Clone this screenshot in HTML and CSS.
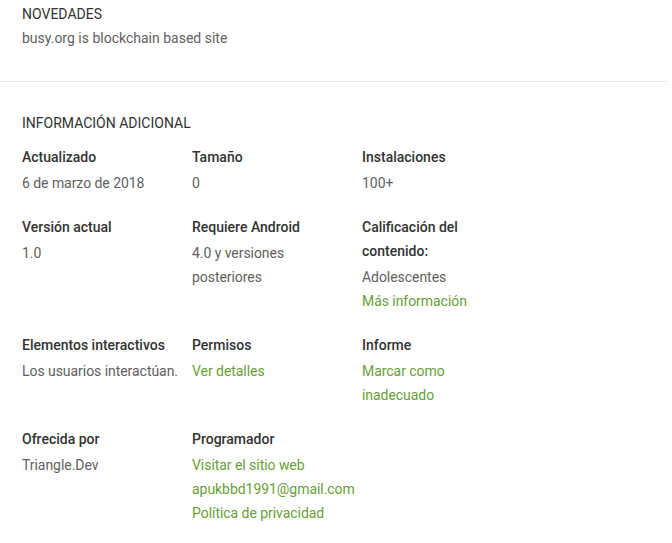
FILE: index.html
```html
<!DOCTYPE html>
<html lang="es">
<head>
<meta charset="utf-8">
<link rel="stylesheet" href="styles.css">
</head>
<body>
<div class="page">
  <section class="whatsnew">
    <h2 class="title">NOVEDADES</h2>
    <div class="desc">busy.org is blockchain based site</div>
  </section>
  <hr class="divider">
  <section class="info">
    <h2 class="title">INFORMACIÓN ADICIONAL</h2>
    <div class="grid">
      <div class="item"><div class="label">Actualizado</div><div class="value">6 de marzo de 2018</div></div>
      <div class="item"><div class="label">Tamaño</div><div class="value">0</div></div>
      <div class="item"><div class="label">Instalaciones</div><div class="value">100+</div></div>

      <div class="item"><div class="label">Versión actual</div><div class="value">1.0</div></div>
      <div class="item"><div class="label">Requiere Android</div><div class="value">4.0 y versiones posteriores</div></div>
      <div class="item"><div class="label">Calificación del contenido:</div><div class="value">Adolescentes<br><a class="link" href="#">Más información</a></div></div>

      <div class="item"><div class="label">Elementos interactivos</div><div class="value">Los usuarios interactúan.</div></div>
      <div class="item"><div class="label">Permisos</div><div class="value"><a class="link" href="#">Ver detalles</a></div></div>
      <div class="item"><div class="label">Informe</div><div class="value"><a class="link" href="#">Marcar como inadecuado</a></div></div>

      <div class="item"><div class="label">Ofrecida por</div><div class="value">Triangle.Dev</div></div>
      <div class="item"><div class="label">Programador</div><div class="value"><a class="link block" href="#">Visitar el sitio web</a><a class="link block" href="#">apukbbd1991@gmail.com</a><a class="link block" href="#">Política de privacidad</a></div></div>
    </div>
  </section>
</div>
</body>
</html>
```

FILE: styles.css
```css
html, body {
  margin: 0;
  padding: 0;
  background: #fff;
}
body {
  font-family: Roboto, "Liberation Sans", Arial, sans-serif;
  font-size: 14px;
  line-height: 24px;
  color: #333;
}
.page {
  width: 667px;
  padding-top: 2px;
}
.title {
  margin: 0;
  font-size: 14px;
  font-weight: 400;
  line-height: 24px;
  color: #333;
  padding-left: 22px;
}
.desc {
  padding-left: 22px;
  color: #616161;
}
.divider {
  border: 0;
  border-top: 1px solid #e6e6e6;
  margin: 31px 0 0 0;
  height: 0;
}
.info {
  padding-top: 29px;
}
.grid {
  margin-top: 10px;
  padding-left: 22px;
  display: grid;
  grid-template-columns: 170px 170px 170px;
  row-gap: 20px;
}
.item {
  padding-right: 12px;
}
.label {
  font-weight: 500;
  color: #333;
  margin-bottom: 2px;
}
.value {
  color: #616161;
  letter-spacing: -0.05px;
}
.link {
  color: #689f38;
  text-decoration: none;
}
.block {
  display: block;
  white-space: nowrap;
}
```
